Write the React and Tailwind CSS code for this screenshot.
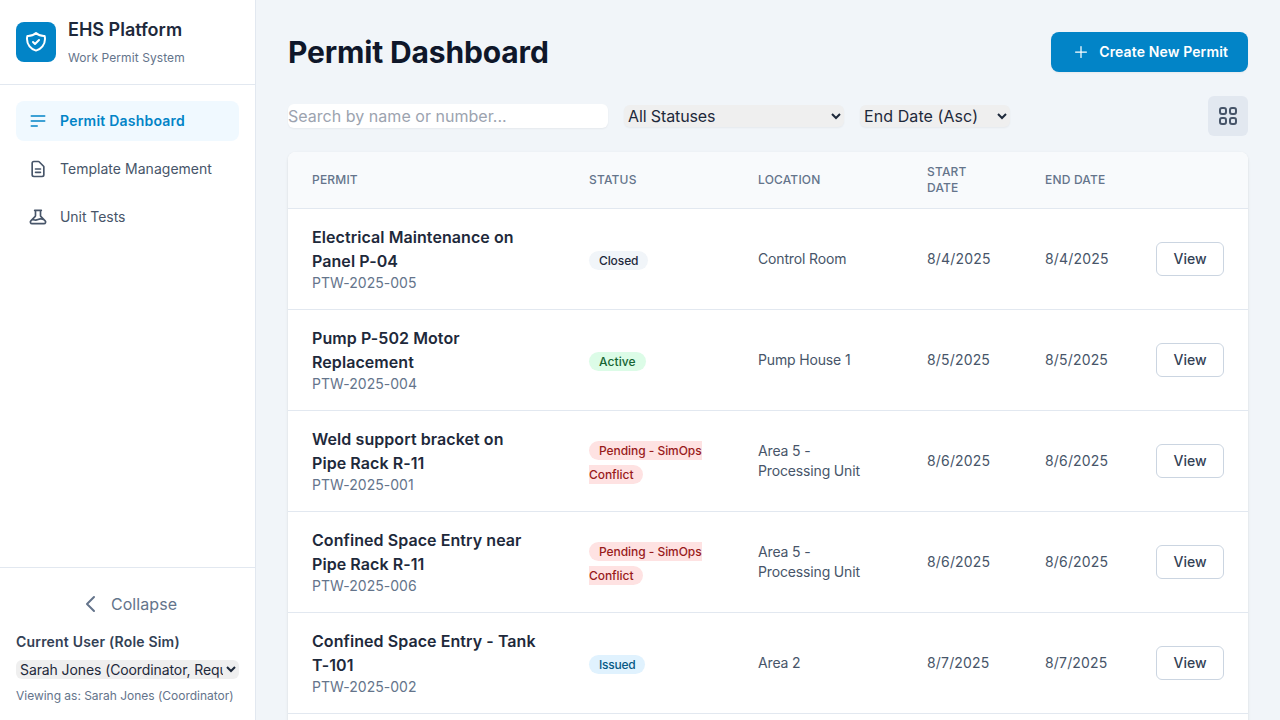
const rows = [
  { name: 'Electrical Maintenance on Panel P-04', id: 'PTW-2025-005', status: 'Closed', tone: 'bg-[#f1f5f9] text-[#1e293b] tracking-[-0.1px]', place: 'Control Room', date: '8/4/2025' },
  { name: 'Pump P-502 Motor Replacement', id: 'PTW-2025-004', status: 'Active', tone: 'bg-[#dcfce7] text-[#166534] tracking-[0.1px]', place: 'Pump House 1', date: '8/5/2025' },
  { name: 'Weld support bracket on Pipe Rack R-11', id: 'PTW-2025-001', status: 'Pending - SimOps Conflict', tone: 'bg-[#fee2e2] text-[#991b1b] tracking-[-0.05px]', place: 'Area 5 - Processing Unit', date: '8/6/2025' },
  { name: 'Confined Space Entry near Pipe Rack R-11', id: 'PTW-2025-006', status: 'Pending - SimOps Conflict', tone: 'bg-[#fee2e2] text-[#991b1b] tracking-[-0.05px]', place: 'Area 5 - Processing Unit', date: '8/6/2025' },
  { name: 'Confined Space Entry - Tank T-101', id: 'PTW-2025-002', status: 'Issued', tone: 'bg-[#e0f2fe] text-[#075985] tracking-[-0.25px]', place: 'Area 2', date: '8/7/2025' },
];

const icons = {
  shield: 'M9 12l2 2 4-4m5.618-4.016A11.955 11.955 0 0112 2.944a11.955 11.955 0 01-8.618 3.04A12.02 12.02 0 003 9c0 5.591 3.824 10.29 9 11.622 5.176-1.332 9-6.03 9-11.622 0-1.042-.133-2.052-.382-3.016z',
  list: 'M4 6h16M4 12h16M4 18h7',
  document: 'M9 12h6m-6 4h6m2 5H7a2 2 0 01-2-2V5a2 2 0 012-2h5.586a1 1 0 01.707.293l5.414 5.414a1 1 0 01.293.707V19a2 2 0 01-2 2z',
  beaker: 'M19.428 15.428a2 2 0 00-1.022-.547l-2.387-.477a6 6 0 00-3.86.517l-.318.158a6 6 0 01-3.86.517L6.05 15.21a2 2 0 00-1.806.547M8 4h8l-1 1v5.172a2 2 0 00.586 1.414l5 5c1.26 1.26.367 3.414-1.415 3.414H4.828c-1.782 0-2.674-2.154-1.414-3.414l5-5A2 2 0 009 10.172V5L8 4z',
  chevron: 'M15 19l-7-7 7-7',
  plus: 'M12 5.5v13M5.5 12h13',
  grid: 'M4 6a2 2 0 012-2h2a2 2 0 012 2v2a2 2 0 01-2 2H6a2 2 0 01-2-2V6zM14 6a2 2 0 012-2h2a2 2 0 012 2v2a2 2 0 01-2 2h-2a2 2 0 01-2-2V6zM4 16a2 2 0 012-2h2a2 2 0 012 2v2a2 2 0 01-2 2H6a2 2 0 01-2-2v-2zM14 16a2 2 0 012-2h2a2 2 0 012 2v2a2 2 0 01-2 2h-2a2 2 0 01-2-2v-2z',
};

function Icon({ name, className, width = 2 }) {
  return (
    <svg className={className} viewBox="0 0 24 24" fill="none" stroke="currentColor" strokeWidth={width} strokeLinecap="round" strokeLinejoin="round">
      <path d={icons[name]} />
    </svg>
  );
}

function Sidebar() {
  return (
    <aside className="flex w-64 shrink-0 flex-col border-r border-[#e2e8f0] bg-white">
      <div className="flex h-[85px] items-center gap-3 border-b border-[#e2e8f0] px-4">
        <div className="flex size-10 items-center justify-center rounded-lg bg-[#0284c7] text-white">
          <Icon name="shield" className="size-6" />
        </div>
        <div>
          <h1 className="text-lg font-semibold leading-7 text-[#1e293b]">EHS Platform</h1>
          <p className="pt-1 text-xs leading-5 tracking-[0.09px] text-[#64748b]">Work Permit System</p>
        </div>
      </div>
      <nav className="flex flex-1 flex-col gap-2 p-4 text-sm text-[#475569]">
        <a className="flex h-10 items-center gap-3 rounded-lg bg-[#f0f9ff] px-3 font-semibold tracking-[0.22px] text-[#0284c7]">
          <Icon name="list" className="size-5" />
          Permit Dashboard
        </a>
        <a className="flex h-10 items-center gap-3 rounded-lg px-3 tracking-[0.03px]">
          <Icon name="document" className="size-5" />
          Template Management
        </a>
        <a className="flex h-10 items-center gap-3 rounded-lg px-3 tracking-[-0.05px]">
          <Icon name="beaker" className="size-5" />
          Unit Tests
        </a>
      </nav>
      <div className="border-t border-[#e2e8f0] p-4">
        <button className="flex h-10 w-full items-center justify-center gap-2 pl-px text-base tracking-[0.06px] text-[#64748b]">
          <Icon name="chevron" className="size-6" />
          Collapse
        </button>
        <label className="mt-2 block text-sm font-semibold leading-5 tracking-[0.19px] text-[#334155]">Current User (Role Sim)</label>
        <select className="mt-2 block h-[19px] w-full rounded-md bg-[#efefef] pb-px text-sm tracking-[-0.1px] text-[#1e293b]">
          <option>Sarah Jones (Coordinator, Requester)</option>
        </select>
        <p className="mt-[9px] text-xs leading-4 tracking-[-0.02px] text-[#64748b]">Viewing as: Sarah Jones (Coordinator)</p>
      </div>
    </aside>
  );
}

export default function App() {
  return (
    <div className="flex h-screen overflow-hidden bg-[#f1f5f9] font-['Inter',sans-serif] text-[#1e293b]">
      <Sidebar />
      <main className="flex-1 overflow-hidden p-8">
        <div className="flex h-10 items-center justify-between">
          <h2 className="text-3xl font-bold tracking-[-0.15px] text-[#0f172a]">Permit Dashboard</h2>
          <button className="flex h-10 items-center gap-2 rounded-lg bg-[#0284c7] px-5 text-sm font-semibold tracking-[0.12px] text-white shadow-xs">
            <Icon name="plus" className="size-5" width={1.5} />
            Create New Permit
          </button>
        </div>
        <div className="mt-6 flex h-10 items-center gap-4">
          <input className="h-6 w-80 rounded-md bg-white text-base tracking-[0.03px] shadow-xs placeholder:text-[#9ca3af]" placeholder="Search by name or number..." />
          <select className="h-[22px] w-[220px] rounded-md bg-[#efefef] text-base leading-6 tracking-[-0.12px] shadow-xs"><option>All Statuses</option></select>
          <select className="h-[22px] w-[150px] rounded-md bg-[#efefef] text-base leading-6 tracking-[0.08px] shadow-xs"><option>End Date (Asc)</option></select>
          <button className="ml-auto flex size-10 items-center justify-center rounded-md bg-[#e2e8f0] text-[#475569]">
            <Icon name="grid" className="size-6" />
          </button>
        </div>
        <div className="mt-4 min-h-[680px] overflow-hidden rounded-lg bg-white shadow-sm">
          <table className="w-full table-fixed text-left">
            <colgroup>
              <col className="w-[277px]" /><col className="w-[169px]" /><col className="w-[169px]" />
              <col className="w-[118px]" /><col className="w-[111px]" /><col className="w-[116px]" />
            </colgroup>
            <thead className="bg-[#f8fafc] text-xs uppercase tracking-[0.18px] text-[#64748b]">
              <tr className="h-14 border-b border-[#e2e8f0]">
                {['Permit', 'Status', 'Location', 'Start Date', 'End Date', ''].map((h, i) => (
                  <th key={i} className="px-6 py-[11px] font-medium">{h}</th>
                ))}
              </tr>
            </thead>
            <tbody>
              {rows.map(({ name, id, status, tone, place, date }) => (
                <tr key={id} className="h-[101px] border-b border-[#e2e8f0] text-sm text-[#475569]">
                  <td className="px-6 py-4">
                    <div className="text-base font-[640] tracking-[0.07px] text-[#1e293b]">{name}</div>
                    <div className="leading-5 tracking-[0.04px] text-[#64748b]">{id}</div>
                  </td>
                  <td className="px-6 text-base"><span className={`rounded-full px-2.5 py-0.5 text-xs font-medium ${tone}`}>{status}</span></td>
                  <td className="px-6 tracking-[-0.15px]">{place}</td>
                  <td className="px-6 tracking-[0.17px]">{date}</td>
                  <td className="px-6 tracking-[0.17px]">{date}</td>
                  <td className="px-6 text-right">
                    <button className="h-[34px] w-[68px] rounded-md border border-[#cbd5e1] bg-white text-sm font-medium text-[#334155]">View</button>
                  </td>
                </tr>
              ))}
            </tbody>
          </table>
        </div>
      </main>
    </div>
  );
}
